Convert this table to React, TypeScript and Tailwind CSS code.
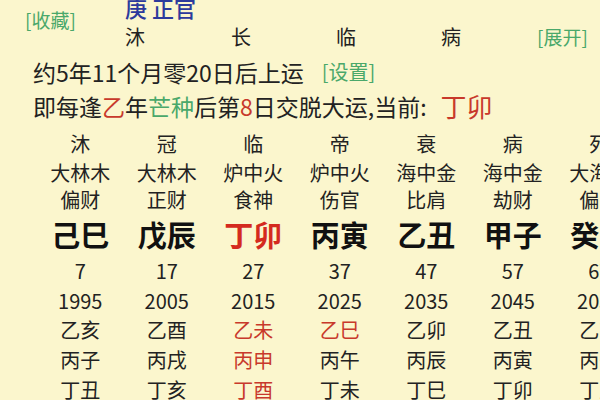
const cols = [
  { s: "沐", ny: "大林木", ss: "偏财", gz: "己巳", age: "7", year: "1995", ln: ["乙亥", "丙子", "丁丑"], hot: false },
  { s: "冠", ny: "大林木", ss: "正财", gz: "戊辰", age: "17", year: "2005", ln: ["乙酉", "丙戌", "丁亥"], hot: false },
  { s: "临", ny: "炉中火", ss: "食神", gz: "丁卯", age: "27", year: "2015", ln: ["乙未", "丙申", "丁酉"], hot: true },
  { s: "帝", ny: "炉中火", ss: "伤官", gz: "丙寅", age: "37", year: "2025", ln: ["乙巳", "丙午", "丁未"], hot: false },
  { s: "衰", ny: "海中金", ss: "比肩", gz: "乙丑", age: "47", year: "2035", ln: ["乙卯", "丙辰", "丁巳"], hot: false },
  { s: "病", ny: "海中金", ss: "劫财", gz: "甲子", age: "57", year: "2045", ln: ["乙丑", "丙寅", "丁卯"], hot: false },
  { s: "死", ny: "大海水", ss: "偏印", gz: "癸亥", age: "67", year: "2055", ln: ["乙亥", "丙子", "丁丑"], hot: false },
];

export default function App() {
  return (
    <div
      className="w-[600px] h-[400px] overflow-hidden bg-[#fbf6cd] text-[#222]"
      style={{ fontFamily: '"Noto Sans CJK SC", "Noto Sans", sans-serif' }}
    >
      {/* header */}
      <div className="flex h-[55px]">
        <div className="w-[125px] pl-[25px] pt-[7px] text-[19px] leading-[26px] text-[#4aa86a]">[收藏]</div>
        <div className="flex flex-col">
          <div className="-mt-[7px] h-[28px] text-[22px] leading-[28px] font-medium text-[#2c3a9c]">庚 正官</div>
          <div className="mt-[3px] flex text-[20px] leading-[26px]">
            <span className="w-[106px]">沐</span>
            <span className="w-[105px]">长</span>
            <span className="w-[105px]">临</span>
            <span className="w-[96px]">病</span>
            <span className="text-[19px] text-[#4aa86a]">[展开]</span>
          </div>
        </div>
      </div>

      <div className="pl-[33px] text-[23px] leading-[34px] flex items-center">
        <span>约5年11个月零20日后上运</span>
        <span className="ml-[18px] text-[20px] text-[#4aa86a]">[设置]</span>
      </div>
      <div className="pl-[33px] text-[23px] leading-[34px] flex items-center">
        <span>即每逢</span>
        <span className="text-[#c8392b]">乙</span>
        <span>年</span>
        <span className="text-[#4aa86a]">芒种</span>
        <span>后第</span>
        <span className="text-[#c8392b]">8</span>
        <span>日交脱大运,当前:</span>
        <span className="ml-[14px] text-[26px] text-[#c8392b]">丁卯</span>
      </div>

      {/* da yun table */}
      <div className="mt-[7px] flex pl-[37px]">
        {cols.map((c) => (
          <div
            key={c.gz}
            className="w-[86.5px] shrink-0 flex flex-col items-center text-[20px]"
          >
            <div className="h-[28px] leading-[28px]">{c.s}</div>
            <div className="h-[30px] leading-[30px]">{c.ny}</div>
            <div className="h-[24px] leading-[24px]">{c.ss}</div>
            <div className={`h-[44px] leading-[44px] text-[29px] font-bold ${c.hot ? "text-[#d42a1e]" : "text-[#111]"}`}>{c.gz}</div>
            <div className="h-[30px] leading-[30px]">{c.age}</div>
            <div className="h-[29px] leading-[29px]">{c.year}</div>
            {c.ln.map((g, i) => (
              <div
                key={g + i}
                className={`h-[30px] leading-[30px] ${c.hot || (c.year === "2025" && i === 0) ? "text-[#c8392b]" : ""}`}
              >
                {g}
              </div>
            ))}
          </div>
        ))}
      </div>
    </div>
  );
}
